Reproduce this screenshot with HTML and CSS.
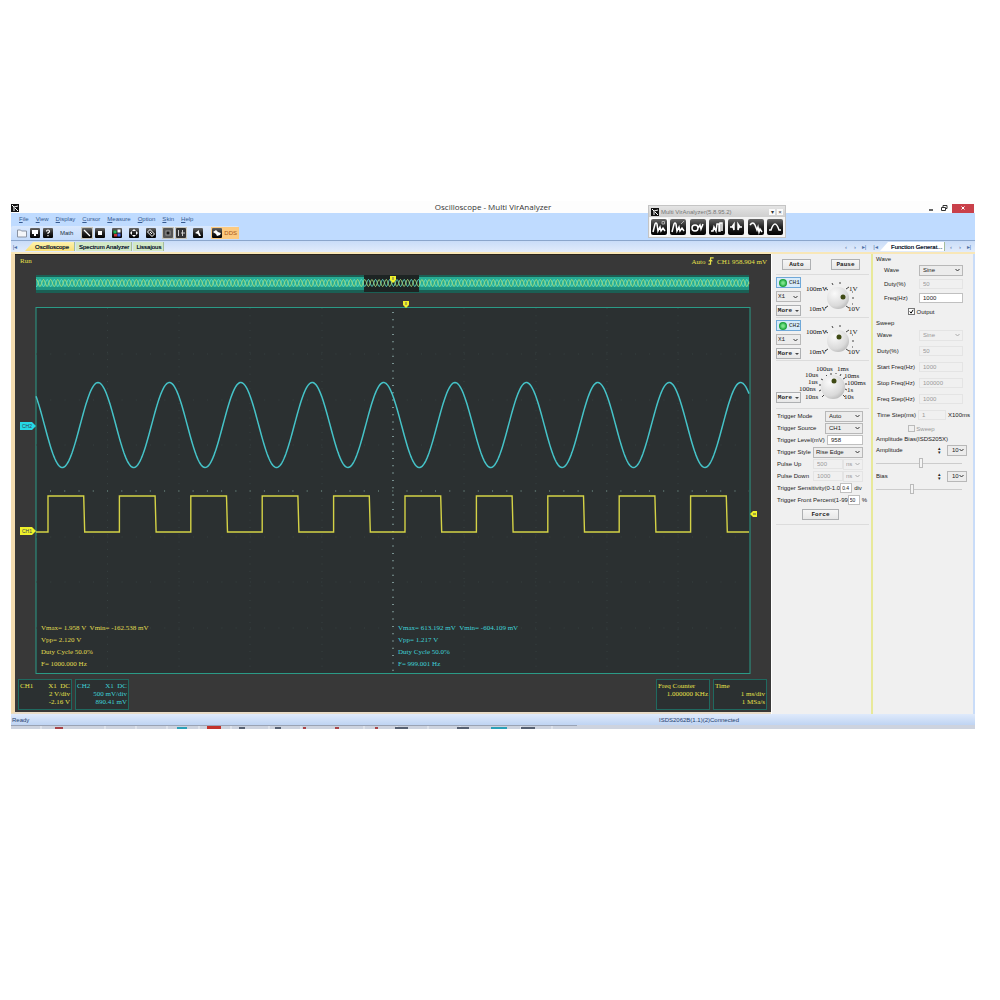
FILE: index.html
```html
<!DOCTYPE html>
<html lang="en">
<head>
<meta charset="utf-8">
<title>Oscilloscope - Multi VirAnalyzer</title>
<link rel="stylesheet" href="styles.css">
</head>
<body>
<svg class="defs" aria-hidden="true">
  <defs>
    <linearGradient id="key" x1="0" y1="0" x2="0" y2="1"><stop offset="0" stop-color="#666"/><stop offset=".5" stop-color="#222"/><stop offset="1" stop-color="#000"/></linearGradient>
    <radialGradient id="dial" cx=".35" cy=".3" r=".8"><stop offset="0" stop-color="#fafafa"/><stop offset=".7" stop-color="#dadada"/><stop offset="1" stop-color="#b4b4b4"/></radialGradient>
  </defs>
</svg>
<div class="window">
  <header class="titlebar">
    <svg class="app-icon" viewBox="0 0 8 8"><rect width="8" height="8" fill="#111"/><path d="M1 1l2 2v4M3 3l4-1M4 4l3 3" stroke="#fff" fill="none"/></svg>
    <h1>Oscilloscope - Multi VirAnalyzer</h1>
    <div class="winbtns">
      <button aria-label="Minimize"><svg viewBox="0 0 8 8"><path d="M2 6h4" stroke="#333" stroke-width="1.5"/></svg></button>
      <button aria-label="Restore"><svg viewBox="0 0 8 8"><path d="M1.500 3.500h4v3h-4zM3 3.500v-2h4v3h-1.500" fill="none" stroke="#333"/></svg></button>
      <button class="close" aria-label="Close"><svg viewBox="0 0 8 8"><path d="M2.500 2.500l3 3m0-3l-3 3" stroke="#fff"/></svg></button>
    </div>
  </header>

  <div class="ribbon">
    <nav class="menu">
      <a href="#"><u>F</u>ile</a><a href="#"><u>V</u>iew</a><a href="#"><u>D</u>isplay</a><a href="#"><u>C</u>ursor</a><a href="#"><u>M</u>easure</a><a href="#"><u>O</u>ption</a><a href="#"><u>S</u>kin</a><a href="#"><u>H</u>elp</a>
    </nav>
    <div class="toolbar">
      <button aria-label="Open"><svg viewBox="0 0 10 10"><path d="M.5 2h3l1 1h5v6h-9z" fill="#f4f6fa" stroke="#8a93a3"/></svg></button>
      <button aria-label="Save"><svg viewBox="0 0 10 10"><rect width="10" height="10" rx="1" fill="url(#key)"/><path d="M2 2h6v4H6v2H4V6H2z" fill="#fff"/></svg></button>
      <button aria-label="Help"><svg viewBox="0 0 10 10"><rect width="10" height="10" rx="1" fill="url(#key)"/><path d="M3.500 3.500q0-1.500 1.500-1.500t1.500 1.300Q6.500 4.500 5 5v1M5 7v1.200" fill="none" stroke="#fff" stroke-width="1.200"/></svg></button>
      <button class="math">Math</button>
      <button class="on" aria-label="Line"><svg viewBox="0 0 10 10"><rect width="10" height="10" rx="1" fill="url(#key)"/><path d="M2 2l6 6" stroke="#fff" stroke-width="1.200"/></svg></button>
      <button aria-label="Points"><svg viewBox="0 0 10 10"><rect width="10" height="10" rx="1" fill="url(#key)"/><rect x="3" y="3" width="4" height="4" fill="#fff"/></svg></button>
      <button class="gap" aria-label="Colours"><svg viewBox="0 0 10 10"><rect width="10" height="10" rx="1" fill="url(#key)"/><path d="M1.500 2.500h3v3h-3z" fill="#2b5"/><path d="M5.500 1.500h3v3h-3z" fill="#fff"/><path d="M2 6h3v2.500H2z" fill="#c33"/><path d="M5.500 5.500h3v3h-3z" fill="#46e"/></svg></button>
      <button class="gap" aria-label="Move"><svg viewBox="0 0 10 10"><rect width="10" height="10" rx="1" fill="url(#key)"/><path d="M5 1l2 2H3zM5 9l2-2H3zM1 5l2-2v4zM9 5L7 3v4z" fill="#fff"/></svg></button>
      <button class="gap" aria-label="Measure"><svg viewBox="0 0 10 10"><rect width="10" height="10" rx="1" fill="url(#key)"/><path d="M4 1.500l4.500 4.500-2.500 2.500L1.500 4zM4 4l2 2" stroke="#fff" fill="none"/></svg></button>
      <button class="on gap" aria-label="Single"><svg viewBox="0 0 10 10"><rect width="10" height="10" rx="1" fill="#555"/><rect x="3" y="3" width="4" height="4" fill="#1a1a1a" stroke="#999"/></svg></button>
      <button class="on" aria-label="Split"><svg viewBox="0 0 10 10"><rect width="10" height="10" rx="1" fill="#333"/><path d="M2.500 2v6M6.500 2v6M5 5h4" stroke="#ccc"/></svg></button>
      <button class="gap" aria-label="Tools"><svg viewBox="0 0 10 10"><rect width="10" height="10" rx="1" fill="url(#key)"/><path d="M2 5l4-3v2l2 4H6L5 6z" fill="#fff"/></svg></button>
      <button class="dds"><svg viewBox="0 0 10 10"><rect width="10" height="10" rx="1" fill="url(#key)"/><path d="M1 4l3-2 2 2 3 1-1 2-3 1-1-2z" fill="#fff"/></svg>DDS</button>
    </div>
  </div>

  <div class="tabs">
    <div class="tabset">
      <button class="arrow first">|◂</button>
      <button class="tab active">Oscilloscope</button><button class="tab">Spectrum Analyzer</button><button class="tab">Lissajous</button>
    </div>
    <div class="arrows"><button class="arrow">‹</button><button class="arrow">›</button><button class="arrow">▸|</button></div>
    <div class="fn-tabs">
      <button class="arrow">|◂</button><button class="tab white">Function Generat...</button><button class="arrow">‹</button><button class="arrow">›</button><button class="arrow">▸|</button>
    </div>
  </div>

  <main class="main">
    <section class="scope">
      <div class="scope-head"><span>Run</span><span>Auto <svg viewBox="0 0 6 9"><path d="M0 8h2.500V1H6M0.500 5L2.500 3l2 2" fill="none" stroke="#e6e04a" stroke-width="1.300"/></svg> CH1 958.904 mV</span></div>
      <svg class="display" viewBox="0 0 756 408">
        <rect x="21" y="7" width="713" height="18" fill="#1b5f54"/>
        <rect x="21" y="9" width="713" height="13" fill="#27ad94"/>
        <rect x="21" y="19" width="713" height="3" fill="#1f9480"/>
        <rect x="349" y="7" width="55" height="17" fill="#1d2423"/>
        <path id="ovA" fill="none" stroke="#62dccb" stroke-width=".9"/>
        <path id="ovB" fill="none" stroke="#a9dc7c" stroke-width=".9"/>
        <rect x="21" y="39.500" width="714" height="366" fill="#2b3031" stroke="#2b9a86"/>
        <g stroke="#384242" stroke-dasharray="1 6.300">
          <path d="M92.500 40v365M164 40v365M235 40v365M307 40v365M449 40v365M521 40v365M592 40v365M663 40v365"/>
          <path stroke-dasharray="1 13.260" d="M21 86h713M21 132h713M21 177h713M21 269h713M21 314h713M21 360h713"/>
        </g>
        <path d="M378 44v361" stroke="#78908f" stroke-width="2" stroke-dasharray="1 6.300"/>
        <path d="M35 223h699" stroke="#566a66" stroke-width="2" stroke-dasharray="1 13.260"/>
        <path id="sine" fill="none" stroke="#45c3c8" stroke-width="1.500"/>
        <path id="square" fill="none" stroke="#d4d246" stroke-width="1.400"/>
        <path d="M375 8h6v4l-3 3-3-3zM388 33h6v4l-3 3-3-3z" fill="#eef02a"/>
        <path d="M378 9v3M391 34v3" stroke="#666"/>
        <path d="M5 154h12l4 4-4 4H5z" fill="#25d9e6"/><path d="M5 259h12l4 4-4 4H5z" fill="#eef02a"/>
        <path d="M735 246l3-3h4v6h-4z" fill="#eef02a"/><path d="M738 246h3" stroke="#555"/>
        <text class="tag" x="7" y="160">CH2</text><text class="tag" x="7" y="265">CH1</text>
        <g class="ch1"><text x="26" y="362">Vmax= 1.958 V&#160; Vmin= -162.538 mV</text><text x="26" y="374">Vpp= 2.120 V</text><text x="26" y="386">Duty Cycle 50.0%</text><text x="26" y="398">F= 1000.000 Hz</text></g>
        <g class="ch2"><text x="383" y="362">Vmax= 613.192 mV&#160; Vmin= -604.109 mV</text><text x="383" y="374">Vpp= 1.217 V</text><text x="383" y="386">Duty Cycle 50.0%</text><text x="383" y="398">F= 999.001 Hz</text></g>
      </svg>
      <div class="scope-foot">
        <div class="box"><p><span>CH1</span><span>X1&#160; DC</span></p><p>2 V/div</p><p>-2.16 V</p></div>
        <div class="box cyan"><p><span>CH2</span><span>X1&#160; DC</span></p><p>500 mV/div</p><p>890.41 mV</p></div>
        <div class="box push"><p><span>Freq Counter</span></p><p>1.000000 KHz</p></div>
        <div class="box"><p><span>Time</span></p><p>1 ms/div</p><p>1 MSa/s</p></div>
      </div>
    </section>

    <section class="controls">
      <div class="run"><button class="btn">Auto</button><button class="btn">Pause</button></div>
      <div class="channel">
        <div class="stack">
          <button class="ch"><i></i>CH1</button>
          <select class="mono" aria-label="CH1 probe"><option>X1</option></select>
          <button class="btn more">More</button>
        </div>
        <svg class="knob" viewBox="0 0 68 42">
          <g stroke="#444"><path d="M22 11l3 2M29 6l1 2M37 5v2M46 10l-3 2M51 21h-2M50 15l-1 0M50 27l-1 0M22 31l3-2M46 31l-3-2"/></g>
          <circle cx="35" cy="21" r="11" fill="url(#dial)"/><circle cx="40" cy="20" r="2.500" fill="#3f4a14"/>
          <text x="3" y="14">100mV</text><text x="6" y="34">10mV</text><text x="46" y="14">1V</text><text x="45" y="34">10V</text>
        </svg>
      </div>
      <div class="channel">
        <div class="stack">
          <button class="ch"><i></i>CH2</button>
          <select class="mono" aria-label="CH2 probe"><option>X1</option></select>
          <button class="btn more">More</button>
        </div>
        <svg class="knob" viewBox="0 0 68 42">
          <g stroke="#444"><path d="M22 11l3 2M29 6l1 2M37 5v2M46 10l-3 2M51 21h-2M50 15l-1 0M50 27l-1 0M22 31l3-2M46 31l-3-2"/></g>
          <circle cx="35" cy="21" r="11" fill="url(#dial)"/><circle cx="36" cy="17" r="2.500" fill="#3f4a14"/>
          <text x="3" y="14">100mV</text><text x="6" y="34">10mV</text><text x="46" y="14">1V</text><text x="45" y="34">10V</text>
        </svg>
      </div>
      <div class="channel time">
        <div class="stack"><button class="btn more">More</button></div>
        <svg class="knob" viewBox="0 0 70 46">
          <g stroke="#444"><path d="M20 16l2 1M18 22h2M18 28l2-1M21 34l2-2M25 12l1 1M30 10v2M35 10v1M40 11l-1 2M44 15l-2 1M46 21h-2M46 27l-2-1M44 34l-2-2"/></g>
          <circle cx="32" cy="24" r="12" fill="url(#dial)"/><circle cx="33" cy="18" r="2.500" fill="#3f4a14"/>
          <text x="15" y="8">100us</text><text x="36" y="8">1ms</text><text x="4" y="14">10us</text><text x="7" y="21">1us</text><text x="-2" y="28">100ns</text><text x="4" y="36">10ns</text><text x="43" y="15">10ms</text><text x="46" y="22">100ms</text><text x="46" y="29">1s</text><text x="43" y="36">10s</text>
        </svg>
      </div>
      <form class="trigger">
        <div><label for="tm">Trigger Mode</label><select id="tm" class="w38"><option>Auto</option></select></div>
        <div><label for="ts">Trigger Source</label><select id="ts" class="w38"><option>CH1</option></select></div>
        <div><label for="tl">Trigger Level(mV)</label><input id="tl" class="w36" value="958"></div>
        <div><label for="ty">Trigger Style</label><select id="ty" class="w50"><option>Rise Edge</option></select></div>
        <div><label for="pu">Pulse Up</label><input id="pu" class="w30" value="500" disabled><select class="w20" aria-label="Pulse up unit" disabled><option>ns</option></select></div>
        <div><label for="pd">Pulse Down</label><input id="pd" class="w30" value="1000" disabled><select class="w20" aria-label="Pulse down unit" disabled><option>ns</option></select></div>
        <div><label class="tight" for="se">Trigger Sensitivity(0-1.0</label><input id="se" class="w12" value="0.4"><span>div</span></div>
        <div><label class="tight" for="fp">Trigger Front Percent(1-99</label><input id="fp" class="w12" value="50"><span>%</span></div>
        <button type="button" class="btn force">Force</button>
      </form>
    </section>

    <section class="generator">
      <fieldset>
        <legend>Wave</legend>
        <div class="row in"><label for="w1">Wave</label><select id="w1"><option>Sine</option></select></div>
        <div class="row in"><label for="d1">Duty(%)</label><input id="d1" value="50" disabled></div>
        <div class="row in"><label for="f1">Freq(Hz)</label><input id="f1" value="1000"></div>
        <label class="check"><input type="checkbox" checked>Output</label>
      </fieldset>
      <fieldset class="sweep">
        <legend>Sweep</legend>
        <div class="row"><label for="w2">Wave</label><select id="w2" disabled><option>Sine</option></select></div>
        <div class="row"><label for="d2">Duty(%)</label><input id="d2" value="50" disabled></div>
        <div class="row"><label for="sf">Start Freq(Hz)</label><input id="sf" value="1000" disabled></div>
        <div class="row"><label for="pf">Stop Freq(Hz)</label><input id="pf" value="100000" disabled></div>
        <div class="row"><label for="fs">Freq Step(Hz)</label><input id="fs" value="1000" disabled></div>
        <div class="row step"><label for="st">Time Step(ms)</label><input id="st" value="1" disabled><span>X100ms</span></div>
        <label class="check dim"><input type="checkbox" disabled>Sweep</label>
      </fieldset>
      <fieldset class="bias">
        <legend>Amplitude Bias(ISDS205X)</legend>
        <div class="lvl"><label for="am">Amplitude</label><span class="spin"><button aria-label="Up">▴</button><button aria-label="Down">▾</button></span><select aria-label="Amplitude step"><option>10</option></select></div>
        <input id="am" type="range" value="52">
        <div class="lvl"><label for="bi">Bias</label><span class="spin"><button aria-label="Up">▴</button><button aria-label="Down">▾</button></span><select aria-label="Bias step"><option>10</option></select></div>
        <input id="bi" type="range" value="41">
      </fieldset>
    </section>
  </main>

  <footer class="status"><span>Ready</span><span class="conn">ISDS2062B(1.1)(2)Connected</span></footer>
  <svg class="taskbar" viewBox="0 0 964 4" preserveAspectRatio="none">
    <rect width="964" height="4" fill="#cdd3df"/>
    <path d="M0 .5h566" stroke="#9aa3b4"/>
    <path d="M30 1v3M94 1v3M125 1v3M156 1v3M188 1v3M220 1v3M258 1v3M290 1v3M353 1v3M386 1v3M417 1v3M449 1v3M510 1v3M541 1v3" stroke="#eef1f6"/>
    <path d="M166 3h10M480 3h16" stroke="#2ba0b8" stroke-width="2"/><path d="M196 2.500h14" stroke="#c2332c" stroke-width="3"/><path d="M44 3h8M292 3h3M324 3h4M364 3h3" stroke="#a8444a" stroke-width="2"/><path d="M384 3h13M446 3h12M510 3h14M228 3h6M264 3h6" stroke="#566072" stroke-width="2"/>
  </svg>

  <aside class="palette">
    <header><svg viewBox="0 0 8 8"><rect width="8" height="8" fill="#111"/><path d="M1 1l2 2v4M3 3l4-1M4 4l3 3" stroke="#fff" fill="none"/></svg><span>Multi VirAnalyzer(5.8.95.2)</span><button aria-label="Menu">▾</button><button aria-label="Close">×</button></header>
    <div class="palette-tools">
      <button class="sel" aria-label="Oscilloscope"><svg viewBox="0 0 16 16"><rect width="16" height="16" rx="2" fill="url(#key)"/><path d="M2 13L4 5q1-2 2 0l1 7 2-4 1 4 2-3 2 3"/><path class="fine" d="M11 2.500h2.500v2.500H11z"/></svg></button>
      <button aria-label="Spectrum"><svg viewBox="0 0 16 16"><rect width="16" height="16" rx="2" fill="url(#key)"/><path d="M2 13L4 5q1-2 2 0l1 7 2-4 1 4 2-3 2 3"/><path class="fine" d="M11 5l3-3"/></svg></button>
      <button aria-label="Meter"><svg viewBox="0 0 16 16"><rect width="16" height="16" rx="2" fill="url(#key)"/><path d="M2 9q0-3 3-3t3 3-3 3-3-3M8 9l2-3 1 4 2-5"/></svg></button>
      <button aria-label="Logic"><svg viewBox="0 0 16 16"><rect width="16" height="16" rx="2" fill="url(#key)"/><path d="M2 12h2l1-4 2 4 1-7h2v7h1V4h2v8"/></svg></button>
      <button aria-label="Filter"><svg viewBox="0 0 16 16"><rect width="16" height="16" rx="2" fill="url(#key)"/><path d="M2 8h2l2-3v6l-1-3M14 8h-2l-2-3v6l1-3"/></svg></button>
      <button aria-label="Response"><svg viewBox="0 0 16 16"><rect width="16" height="16" rx="2" fill="url(#key)"/><path d="M2 6q3-4 5 0l2 5 1-3 1 5 1-3 2 3"/></svg></button>
      <button aria-label="Pulse"><svg viewBox="0 0 16 16"><rect width="16" height="16" rx="2" fill="url(#key)"/><path d="M2 11h2q2-6 4-6t4 6h2"/></svg></button>
    </div>
  </aside>
</div>
<script src="waves.js"></script>
</body>
</html>
```
FILE: styles.css
```css
* { box-sizing: border-box; }
body { margin: 0; padding: 201px 25px 0 11px; background: #fff; font: 6px/8px "Liberation Sans", Arial, sans-serif; color: #222; }
button, input, select { font: inherit; color: inherit; margin: 0; padding: 0; border: 0; background: none; min-width: 0; }
button { display: flex; align-items: center; justify-content: center; white-space: nowrap; }
svg { display: block; }
p { margin: 0; }
.defs { position: absolute; width: 0; height: 0; }
.window { position: relative; }

.titlebar { display: grid; grid-template-columns: 1fr auto 1fr; align-items: center; height: 12px; background: #fdfdfd; }
.titlebar h1 { margin: 0; font: 8px/12px "Open Sans", "Noto Sans", sans-serif; color: #333; }
.app-icon { width: 8px; height: 8px; margin-top: 2px; }
.winbtns { display: flex; justify-content: flex-end; gap: 3px; padding: 2px 1px 0 0; }
.winbtns button { width: 10px; height: 9px; }
.winbtns svg { width: 8px; height: 8px; }
.winbtns .close { width: 22px; background: #c9404a; }

.ribbon { height: 28px; background: #bfdbff; border-bottom: 1px solid #8ba6cc; }
.menu { display: flex; gap: 7px; padding: 2px 0 0 8px; }
.menu a { color: #35598f; text-decoration: none; line-height: 9px; }
.toolbar { display: flex; align-items: center; gap: 1px; width: max-content; height: 14px; margin-top: 2px; padding-left: 5px; background: linear-gradient(#d9e8fd, #c4dbfb); border-radius: 2px; }
.toolbar button { height: 12px; padding: 0 1px; color: #234; }
.toolbar svg { width: 10px; height: 10px; }
.toolbar .math { padding: 0 7px 0 5px; }
.toolbar .on { background: #c8c5ba; }
.toolbar .gap { margin-left: 4px; }
.toolbar .dds { margin-left: 6px; gap: 2px; padding: 0 2px 0 1px; background: #fcca80; color: #a5551a; }

.tabs { display: grid; grid-template-columns: 1fr auto 104px; height: 13px; background: linear-gradient(#c9dcf8, #e2ecfb); border-bottom: 2px solid #f8e7b8; }
.tabset, .fn-tabs, .arrows { display: flex; align-items: center; }
.tab { height: 9px; padding: 0 2px 0 3px; background: #d2e8c6; border-right: 1px solid #a5bd9c; margin-right: 1px; color: #123; text-shadow: 0 0 0 #123; }
.tab.active { padding: 0 5px 0 10px; background: linear-gradient(#fdf2ad, #fae077); clip-path: polygon(8px 0, 100% 0, 100% 100%, 0 100%); }
.tab.white { padding: 0 2px 0 11px; background: #fff; clip-path: polygon(8px 0, 100% 0, 100% 100%, 0 100%); }
.arrow { width: 8px; color: #4c6fa5; }
.arrow.first { margin-right: 6px; }
.arrows { padding-right: 3px; gap: 1px; }
.fn-tabs .arrow { width: 9px; }

.main { display: grid; grid-template-columns: 1fr 100px 104px; background: #f0f0f0; }
.scope { padding-bottom: 2px; border-left: 4px solid #f3dcb0; background: #383838; border-bottom: 2px solid #e8dcc8; font: 7px/8px "Liberation Serif", serif; color: #e6e04a; }
.scope-head { display: flex; justify-content: space-between; height: 14px; padding: 2px 4px 0 5px; border-top: 1px solid #2a241c; }
.scope-head svg { display: inline-block; width: 6px; height: 8px; vertical-align: -1px; margin: 0 1px; }
.display { width: 100%; height: auto; }
.display text { font: 7px "Liberation Serif", serif; }
.display .tag { font: 5px "Liberation Sans", sans-serif; fill: #345; }
.ch1 { fill: #e0dc50; }
.ch2 { fill: #3fd2d8; }
.scope-foot { display: flex; gap: 3px; padding: 3px 4px 0 3px; }
.box { width: 54px; height: 31px; padding: 2px 1px; border: 1px solid #1f6a60; background: #2b3031; text-align: right; white-space: nowrap; }
.box p { display: flex; justify-content: flex-end; }
.box p:first-child { justify-content: space-between; }
.box.cyan { color: #3fd2d8; }
.box.push { margin-left: auto; }

.controls { padding: 0 2px 0 4px; border-left: 1px solid #fff; }
.btn { height: 11px; border: 1px solid #aeb0b2; background: linear-gradient(#f6f6f6, #e7e7e7); font: bold 6px/8px "Liberation Mono", monospace; }
.run { display: flex; gap: 20px; padding: 5px 0 4px 6px; }
.run .btn { width: 29px; }
.channel { display: flex; gap: 2px; align-items: flex-start; height: 43px; border-top: 1px solid #dcdcdc; padding-top: 2px; }
.stack { display: flex; flex-direction: column; gap: 3px; width: 25px; flex: none; }
.stack .btn, .stack select { width: 25px; height: 11px; }
.stack .ch { height: 11px; justify-content: flex-start; gap: 2px; padding-left: 2px; border: 1px solid #6fa8d8; background: #d8ebfa; font-family: "Liberation Mono", monospace; }
.ch i { width: 8px; height: 8px; border-radius: 50%; background: radial-gradient(#7be38c 20%, #1fa83c 60%, #11802a); }
.more::after { content: ""; margin-left: 3px; border: 2px solid transparent; border-top-color: #444; border-bottom: 0; }
.knob { width: 68px; height: 42px; overflow: visible; }
.knob text { font: 7px "Liberation Serif", serif; fill: #111; }
.time { height: 48px; }
.time .stack { align-self: flex-end; padding-bottom: 5px; }
.time .knob { width: 70px; height: 46px; margin-left: -2px; }

select { appearance: none; height: 11px; padding: 0 9px 0 3px; border: 1px solid #b8b8b8; background: #ececec url("data:image/svg+xml,%3Csvg xmlns='http://www.w3.org/2000/svg' viewBox='0 0 5 4'%3E%3Cpath d='M.5 1l2 2 2-2' fill='none' stroke='%23333'/%3E%3C/svg%3E") no-repeat right 2px center / 5px 4px; }
.mono { font-family: "Liberation Mono", monospace; padding-left: 1px; }
input { height: 10px; padding: 0 3px; border: 1px solid #c0c0c0; background: #fff; }
input:disabled, select:disabled { border-color: #e4e4e4; background-color: #f0f0f0; color: #999; opacity: 1; }
select:disabled { background-image: url("data:image/svg+xml,%3Csvg xmlns='http://www.w3.org/2000/svg' viewBox='0 0 5 4'%3E%3Cpath d='M.5 1l2 2 2-2' fill='none' stroke='%23aaa'/%3E%3C/svg%3E"); }

.trigger { padding: 1px 6px 4px 1px; border: solid #dcdcdc; border-width: 1px 0; }
.trigger div { display: flex; align-items: center; height: 12px; }
.trigger label { flex: 1; white-space: nowrap; }
.trigger .w38 { width: 38px; }
.trigger .w36 { width: 36px; }
.trigger .w50 { width: 50px; padding-left: 2px; }
.trigger .w30 { width: 30px; }
.trigger .w20 { width: 20px; padding: 0 7px 0 2px; }
.trigger .w12 { width: 12px; flex: none; padding: 0 1px; font-size: 5px; }
.trigger .tight { flex: none; }
.trigger span { padding-left: 2px; }
.trigger .force { width: 37px; margin: 3px 0 0 25px; }

.generator { padding: 1px 10px 0 3px; border-left: 2px solid #e8e99a; border-right: 2px solid #c9dcf8; }
fieldset { margin: 0; padding: 0; border: 0; min-width: 0; }
legend { padding: 0; height: 8px; }
.sweep, .bias { margin-top: 1px; }
.row { display: flex; align-items: center; height: 16px; padding-left: 1px; }
.row.in { height: 14px; padding-left: 8px; }
.row label { flex: 1; white-space: nowrap; }
.row input, .row select { width: 44px; }
.row.step { margin-right: -10px; }
.row.step label { flex: none; width: 41px; }
.row.step input { width: 28px; }
.row.step span { margin-left: 2px; }
.check { display: flex; align-items: center; justify-content: center; gap: 1px; height: 13px; padding-left: 4px; }
.check input { appearance: none; width: 7px; height: 7px; padding: 0; border: 1px solid #777; }
.check input:checked { background: #fff url("data:image/svg+xml,%3Csvg xmlns='http://www.w3.org/2000/svg' viewBox='0 0 6 6'%3E%3Cpath d='M1 3l1.500 2L5 1' fill='none' stroke='%23000' stroke-width='1.200'/%3E%3C/svg%3E"); }
.check.dim { color: #999; height: 11px; }
.check.dim input { border-color: #bbb; }
.bias { margin-right: -4px; }
.lvl { display: flex; align-items: center; height: 14px; }
.lvl label { flex: 1; }
.lvl select { width: 20px; padding: 0 7px 0 4px; }
.spin { width: 9px; }
.spin button { height: 4px; font-size: 5px; line-height: 4px; }
input[type="range"] { appearance: none; display: block; width: 86px; height: 12px; padding: 0; border: 0; background: linear-gradient(#ccc, #ccc) no-repeat center / 100% 1px; }
input[type="range"]::-webkit-slider-thumb { appearance: none; width: 4px; height: 10px; border: 1px solid #bbb; background: #f4f4f4; }

.status { display: grid; grid-template-columns: 647px 1fr; align-items: center; height: 11px; padding-left: 1px; background: linear-gradient(#dfeafb, #bfd4f3); color: #24406e; }
.taskbar { width: 100%; height: 4px; }

/* floating launcher window */
.palette { position: absolute; top: 4px; right: 189px; width: 138px; border: 1px solid #c4c4c4; background: #f4f4f4; }
.palette header { display: flex; align-items: center; gap: 2px; height: 11px; padding: 0 2px; background: linear-gradient(#e4e4e4, #cfcfcf); color: #777; }
.palette header svg { width: 8px; height: 8px; }
.palette header span { flex: 1; }
.palette header button { width: 6px; height: 6px; background: #fafafa; color: #333; }
.palette-tools { display: flex; justify-content: space-between; padding: 1px; }
.palette-tools button { width: 18px; height: 18px; }
.palette-tools .sel { background: #fff; }
.palette-tools svg { width: 16px; height: 16px; }
.palette-tools path { fill: none; stroke: #fff; stroke-width: 1.500; }
.palette-tools .fine { stroke: #aaa; stroke-width: 1; }
```
FILE: waves.js
```js
// Traces of the display: x runs over the plot's 713 units, one period is 71.4 units.
const LEFT = 21, RIGHT = 734, PERIOD = 71.4;

function sine(mid, amp, period, peak, step) {
  const pts = [];
  for (let x = LEFT; x <= RIGHT; x += step) {
    pts.push(x + " " + (mid - amp * Math.cos((x - peak) / period * 2 * Math.PI)).toFixed(2));
  }
  return "M" + pts.join("L");
}

function square(high, low, rise) {
  let d = "M" + LEFT + " " + low;
  for (let x = rise; x < RIGHT; x += PERIOD) {
    d += "H" + x.toFixed(1) + "V" + high + "H" + (x + PERIOD / 2).toFixed(1) + "l1 " + (low - high);
  }
  return d + "H" + RIGHT;
}

document.getElementById("sine").setAttribute("d", sine(157, 42.5, PERIOD, 83, 1));
document.getElementById("square").setAttribute("d", square(228, 264, 33));
document.getElementById("ovA").setAttribute("d", sine(15, 3.5, 7.14, 25, 0.5));
document.getElementById("ovB").setAttribute("d", sine(15, 3.5, 7.14, 28.5, 0.5));
```
